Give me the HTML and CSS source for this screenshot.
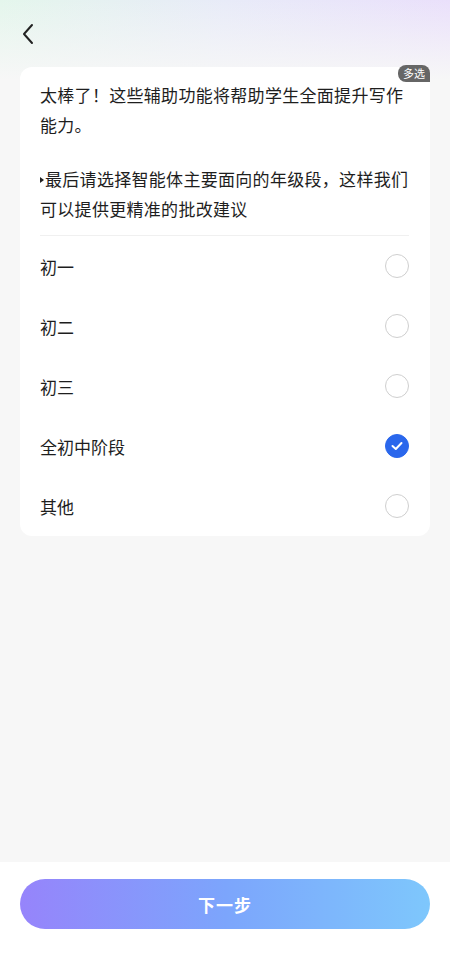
FILE: index.html
```html
<!DOCTYPE html>
<html lang="zh-CN">
<head>
  <meta charset="UTF-8">
  <title>选择年级段</title>
  <link rel="stylesheet" href="styles.css">
</head>
<body>
  <div class="page">
    <header class="top-bar">
      <svg class="back" width="14" height="22" viewBox="0 0 14 22">
        <path d="M11 2 L3 11 L11 20" fill="none" stroke="#222" stroke-width="2" stroke-linecap="round" stroke-linejoin="round"/>
      </svg>
    </header>

    <div class="card">
      <span class="badge">多选</span>
      <p class="msg">太棒了！这些辅助功能将帮助学生全面提升写作能力。</p>
      <p class="msg question"><span class="dot"></span>最后请选择智能体主要面向的年级段，这样我们可以提供更精准的批改建议</p>

      <ul class="options">
        <li class="option"><span>初一</span><span class="radio"></span></li>
        <li class="option"><span>初二</span><span class="radio"></span></li>
        <li class="option"><span>初三</span><span class="radio"></span></li>
        <li class="option"><span>全初中阶段</span>
          <span class="radio checked">
            <svg width="12" height="10" viewBox="0 0 12 10"><path d="M1.5 5 L4.8 8 L10.5 2" fill="none" stroke="#fff" stroke-width="2" stroke-linecap="round" stroke-linejoin="round"/></svg>
          </span>
        </li>
        <li class="option"><span>其他</span><span class="radio"></span></li>
      </ul>
    </div>
  </div>

  <footer class="bottom-bar">
    <button class="next">下一步</button>
  </footer>
</body>
</html>
```

FILE: styles.css
```css
* {
  box-sizing: border-box;
}

body {
  margin: 0;
  height: 958px;
  font-family: "Noto Sans CJK SC", "Noto Sans", sans-serif;
  color: #1e1e1e;
  background: #f7f7f7;
  display: flex;
  flex-direction: column;
}

.page {
  flex: 1;
  background:
    linear-gradient(to bottom, rgba(247,247,247,0) 0, #f7f7f7 80px),
    linear-gradient(to right, #e4f6ec, #e8ebf8 50%, #eae0fb);
  background-repeat: no-repeat;
  background-size: 100% 100px;
  padding: 0 20px;
}

.top-bar {
  height: 67px;
  padding-top: 23px;
}

.back {
  display: block;
  margin-left: 1px;
}

.card {
  position: relative;
  background: #fff;
  border-radius: 12px;
  padding: 13px 21px 0 20px;
}

.badge {
  position: absolute;
  top: -2px;
  right: 0;
  background: #666;
  color: #fff;
  font-size: 11px;
  line-height: 17px;
  padding: 0 5px;
  border-radius: 8px 8px 0 8px;
}

.msg {
  margin: 0;
  font-size: 17px;
  line-height: 30px;
  letter-spacing: 0.3px;
}

.question {
  margin-top: 24px;
  padding-bottom: 11px;
  border-bottom: 1px solid #f0f0f0;
}

.dot {
  display: inline-block;
  width: 0;
  height: 0;
  border-left: 4px solid #222;
  border-top: 3px solid transparent;
  border-bottom: 3px solid transparent;
  vertical-align: middle;
  margin: -3px 1px 0 0;
}

.options {
  list-style: none;
  margin: 0;
  padding: 0;
}

.option {
  height: 60px;
  display: flex;
  align-items: center;
  justify-content: space-between;
  font-size: 17px;
}

.radio {
  width: 24px;
  height: 24px;
  border-radius: 50%;
  border: 1.5px solid #cfcfcf;
  display: flex;
  align-items: center;
  justify-content: center;
}

.radio.checked {
  background: #2a67ec;
  border-color: #2a67ec;
}

.bottom-bar {
  background: #fff;
  height: 96px;
  padding: 17px 20px 0;
}

.next {
  width: 100%;
  height: 50px;
  border: none;
  border-radius: 25px;
  background: linear-gradient(to right, #9684fb, #7ca5fc 50%, #7ec7fc);
  color: #fff;
  font-family: inherit;
  font-size: 17px;
  font-weight: bold;
  letter-spacing: 1px;
}
```
